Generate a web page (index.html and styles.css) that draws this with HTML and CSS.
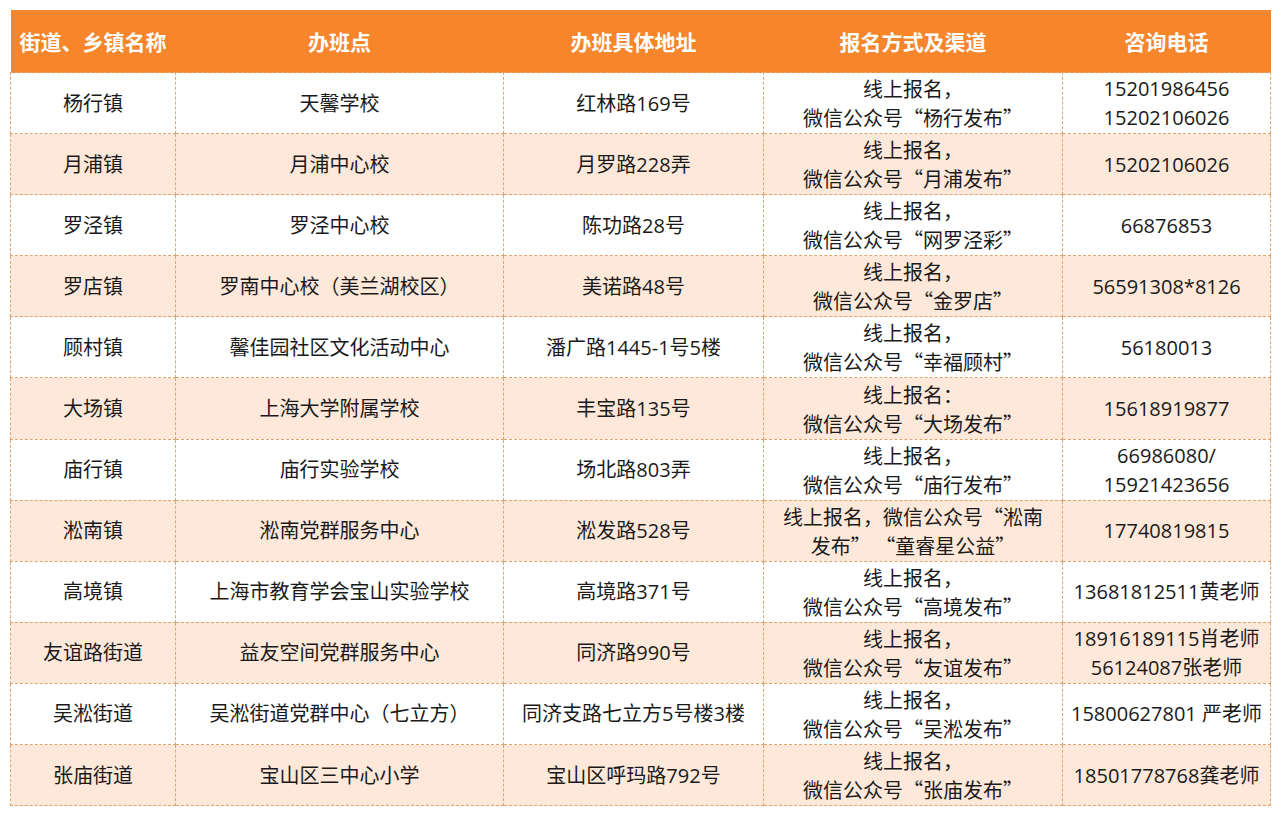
FILE: index.html
```html
<!DOCTYPE html>
<html lang="zh-CN">
<head>
<meta charset="utf-8">
<title>办班点</title>
<link rel="stylesheet" href="styles.css">
</head>
<body>
<table class="sheet">
  <colgroup>
    <col class="c1"><col class="c2"><col class="c3"><col class="c4"><col class="c5">
  </colgroup>
  <thead>
    <tr><th>街道、乡镇名称</th><th>办班点</th><th>办班具体地址</th><th>报名方式及渠道</th><th>咨询电话</th></tr>
  </thead>
  <tbody>
    <tr><td>杨行镇</td><td>天馨学校</td><td>红林路169号</td><td class="way">线上报名，<br>微信公众号“杨行发布”</td><td>15201986456<br>15202106026</td></tr>
    <tr class="alt"><td>月浦镇</td><td>月浦中心校</td><td>月罗路228弄</td><td class="way">线上报名，<br>微信公众号“月浦发布”</td><td>15202106026</td></tr>
    <tr><td>罗泾镇</td><td>罗泾中心校</td><td>陈功路28号</td><td class="way">线上报名，<br>微信公众号“网罗泾彩”</td><td>66876853</td></tr>
    <tr class="alt"><td>罗店镇</td><td>罗南中心校（美兰湖校区）</td><td>美诺路48号</td><td class="way">线上报名，<br>微信公众号“金罗店”</td><td>56591308*8126</td></tr>
    <tr><td>顾村镇</td><td>馨佳园社区文化活动中心</td><td>潘广路1445-1号5楼</td><td class="way">线上报名，<br>微信公众号“幸福顾村”</td><td>56180013</td></tr>
    <tr class="alt"><td>大场镇</td><td>上海大学附属学校</td><td>丰宝路135号</td><td class="way">线上报名：<br>微信公众号“大场发布”</td><td>15618919877</td></tr>
    <tr><td>庙行镇</td><td>庙行实验学校</td><td>场北路803弄</td><td class="way">线上报名，<br>微信公众号“庙行发布”</td><td>66986080/<br>15921423656</td></tr>
    <tr class="alt"><td>淞南镇</td><td>淞南党群服务中心</td><td>淞发路528号</td><td class="way">线上报名，微信公众号“淞南<br>发布” “童睿星公益”</td><td>17740819815</td></tr>
    <tr><td>高境镇</td><td>上海市教育学会宝山实验学校</td><td>高境路371号</td><td class="way">线上报名，<br>微信公众号“高境发布”</td><td>13681812511黄老师</td></tr>
    <tr class="alt"><td>友谊路街道</td><td>益友空间党群服务中心</td><td>同济路990号</td><td class="way">线上报名，<br>微信公众号“友谊发布”</td><td>18916189115肖老师<br>56124087张老师</td></tr>
    <tr><td>吴淞街道</td><td>吴淞街道党群中心（七立方）</td><td>同济支路七立方5号楼3楼</td><td class="way">线上报名，<br>微信公众号“吴淞发布”</td><td>15800627801 严老师</td></tr>
    <tr class="alt"><td>张庙街道</td><td>宝山区三中心小学</td><td>宝山区呼玛路792号</td><td class="way">线上报名，<br>微信公众号“张庙发布”</td><td>18501778768龚老师</td></tr>
  </tbody>
</table>
</body>
</html>
```
FILE: styles.css
```css
html, body {
  margin: 0;
  padding: 0;
  background: #ffffff;
}
body {
  padding: 10px;
  font-family: "Open Sans", "Noto Sans CJK SC", sans-serif;
  color: #1a1a1a;
}
.sheet {
  border-collapse: collapse;
  table-layout: fixed;
  width: 1260px;
}
.c1 { width: 165px; }
.c2 { width: 328px; }
.c3 { width: 260px; }
.c4 { width: 299px; }
.c5 { width: 208px; }
.sheet th {
  background: #f6852b;
  color: #ffffff;
  font-family: "Noto Sans CJK SC", sans-serif;
  font-size: 21px;
  font-weight: 700;
  height: 62px;
  padding: 0;
  text-align: center;
  vertical-align: middle;
  border: 0;
}
.sheet td {
  height: 60.1px;
  padding: 0;
  font-size: 20px;
  line-height: 29px;
  text-align: center;
  vertical-align: middle;
  border: 1px dashed #e2a46e;
  background: #ffffff;
  white-space: nowrap;
}
.sheet td.way {
  font-family: "Noto Sans CJK SC", sans-serif;
}
.sheet tr.alt td {
  background: #fde8d9;
}
```
